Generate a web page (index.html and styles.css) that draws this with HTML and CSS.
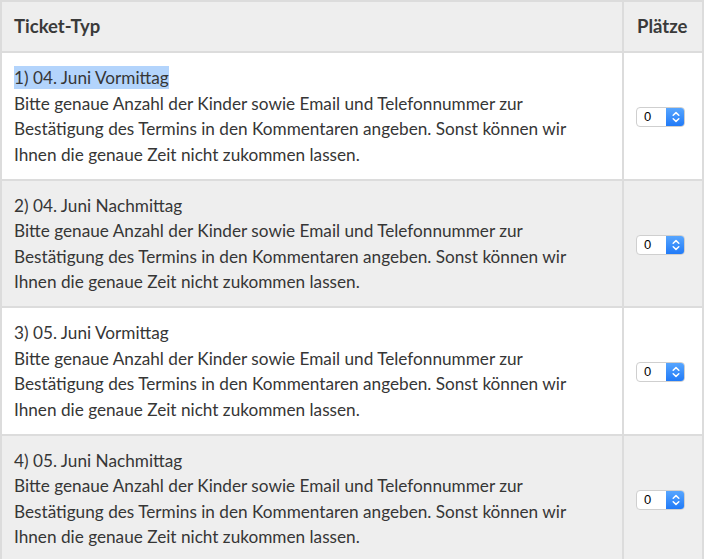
FILE: index.html
```html
<!DOCTYPE html>
<html lang="de">
<head>
<meta charset="utf-8">
<title>Tickets</title>
<link rel="stylesheet" href="styles.css">
</head>
<body>
<table class="tickets">
  <thead>
    <tr>
      <th class="col-type">Ticket-Typ</th>
      <th class="col-seats">Plätze</th>
    </tr>
  </thead>
  <tbody>
    <tr>
      <td class="col-type"><span class="sel">1) 04. Juni Vormittag</span><br>Bitte genaue Anzahl der Kinder sowie Email und Telefonnummer zur Bestätigung des Termins in den Kommentaren angeben. Sonst können wir Ihnen die genaue Zeit nicht zukommen lassen.</td>
      <td class="col-seats"><span class="stepper"><span class="val">0</span><span class="arrows"><svg width="8" height="12" viewBox="0 0 8 12"><path d="M1.2 4.2 L4 1.6 L6.8 4.2 M1.2 7.8 L4 10.4 L6.8 7.8" fill="none" stroke="#fff" stroke-width="1.5" stroke-linecap="round" stroke-linejoin="round"/></svg></span></span></td>
    </tr>
    <tr>
      <td class="col-type">2) 04. Juni Nachmittag<br>Bitte genaue Anzahl der Kinder sowie Email und Telefonnummer zur Bestätigung des Termins in den Kommentaren angeben. Sonst können wir Ihnen die genaue Zeit nicht zukommen lassen.</td>
      <td class="col-seats"><span class="stepper"><span class="val">0</span><span class="arrows"><svg width="8" height="12" viewBox="0 0 8 12"><path d="M1.2 4.2 L4 1.6 L6.8 4.2 M1.2 7.8 L4 10.4 L6.8 7.8" fill="none" stroke="#fff" stroke-width="1.5" stroke-linecap="round" stroke-linejoin="round"/></svg></span></span></td>
    </tr>
    <tr>
      <td class="col-type">3) 05. Juni Vormittag<br>Bitte genaue Anzahl der Kinder sowie Email und Telefonnummer zur Bestätigung des Termins in den Kommentaren angeben. Sonst können wir Ihnen die genaue Zeit nicht zukommen lassen.</td>
      <td class="col-seats"><span class="stepper"><span class="val">0</span><span class="arrows"><svg width="8" height="12" viewBox="0 0 8 12"><path d="M1.2 4.2 L4 1.6 L6.8 4.2 M1.2 7.8 L4 10.4 L6.8 7.8" fill="none" stroke="#fff" stroke-width="1.5" stroke-linecap="round" stroke-linejoin="round"/></svg></span></span></td>
    </tr>
    <tr>
      <td class="col-type">4) 05. Juni Nachmittag<br>Bitte genaue Anzahl der Kinder sowie Email und Telefonnummer zur Bestätigung des Termins in den Kommentaren angeben. Sonst können wir Ihnen die genaue Zeit nicht zukommen lassen.</td>
      <td class="col-seats"><span class="stepper"><span class="val">0</span><span class="arrows"><svg width="8" height="12" viewBox="0 0 8 12"><path d="M1.2 4.2 L4 1.6 L6.8 4.2 M1.2 7.8 L4 10.4 L6.8 7.8" fill="none" stroke="#fff" stroke-width="1.5" stroke-linecap="round" stroke-linejoin="round"/></svg></span></span></td>
    </tr>
  </tbody>
</table>
</body>
</html>
```

FILE: styles.css
```css
html, body {
  margin: 0;
  padding: 0;
  background: #fff;
}
body {
  font-family: Lato, "Open Sans", sans-serif;
  font-size: 17.2px;
  color: #363636;
}
.tickets {
  width: 704px;
  border-collapse: collapse;
  table-layout: fixed;
}
.tickets th,
.tickets td {
  border: 2px solid #dcdcdc;
  padding: 12px 12px 11.5px 12px;
  line-height: 25.5px;
  text-align: left;
  vertical-align: middle;
}
.tickets td.col-type {
  padding-right: 34px;
}
.tickets th {
  background: #eeeeee;
  font-weight: bold;
  font-size: 18.5px;
  color: #3a3a3a;
}
.tickets .col-seats {
  width: 54px;
  padding-left: 13px;
  padding-right: 11px;
}
.tickets tbody tr:nth-child(even) td {
  background: #eeeeee;
}
.sel {
  background: #b3d4fc;
  padding: 1px 0;
}
.stepper {
  display: inline-flex;
  width: 49px;
  height: 20px;
  box-sizing: border-box;
  border: 1px solid #cfcfcf;
  border-radius: 4px;
  background: #fff;
  overflow: hidden;
  vertical-align: middle;
  margin-top: -1px;
  margin-left: -1px;
}
.stepper .val {
  flex: 1;
  font-family: "Liberation Sans", Arial, sans-serif;
  font-size: 13px;
  line-height: 18px;
  color: #000;
  padding-left: 7px;
}
.stepper .arrows {
  width: 19px;
  display: flex;
  align-items: center;
  justify-content: center;
  background: linear-gradient(#5aa8ff, #1e78f7);
  margin: -1px -1px -1px 0;
}
```
